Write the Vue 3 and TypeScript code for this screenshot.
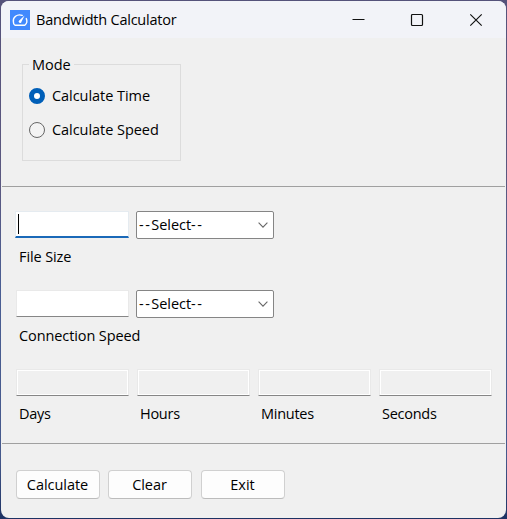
<script setup lang="ts">
import { ref } from 'vue'

interface Unit {
  label: string
  focused: boolean
}

const modes: string[] = ['Calculate Time', 'Calculate Speed']
const mode = ref<string>(modes[0])
const inputs: Unit[] = [
  { label: 'File Size', focused: true },
  { label: 'Connection Speed', focused: false },
]
const results: string[] = ['Days', 'Hours', 'Minutes', 'Seconds']
const actions: string[] = ['Calculate', 'Clear', 'Exit']
</script>

<template>
  <div class="desktop">
    <div class="window">
      <header class="titlebar">
        <svg class="app-icon" width="20" height="20" viewBox="0 0 20 20">
          <rect width="20" height="20" fill="#4189fd" />
          <path d="M12.2 5.3C7 3.6 2.6 7.2 3.4 12C3.6 13.6 4.2 15.2 5.2 15.2H14.8C16.8 13.6 17.3 10.8 16.3 8.6" fill="none" stroke="#fff" stroke-width="1.4" stroke-linecap="round" stroke-linejoin="round" />
          <path d="M14.6 5.5L11.5 11.8A1.4 1.4 0 1 1 9.2 10.5Z" fill="#fff" />
        </svg>
        <span class="title t">Bandwidth Calculator</span>
        <div class="controls">
          <svg width="14" height="14" viewBox="0 0 14 14"><path d="M1.5 6.5H13.5" stroke="#111" /></svg>
          <svg width="14" height="14" viewBox="0 0 14 14"><rect x="1.5" y="1.5" width="11" height="11" rx="1" fill="none" stroke="#111" stroke-width="1.2" /></svg>
          <svg width="14" height="14" viewBox="0 0 14 14"><path d="M1.3 1.3L12.7 12.7M12.7 1.3L1.3 12.7" stroke="#111" stroke-width="1.15" /></svg>
        </div>
      </header>

      <section class="mode-section">
        <fieldset class="group">
          <legend class="t">Mode</legend>
          <label v-for="m in modes" :key="m" class="option" @click="mode = m">
            <span class="radio" :class="{ on: mode === m }"></span>
            <span class="t">{{ m }}</span>
          </label>
        </fieldset>
      </section>

      <section class="form">
        <div v-for="i in inputs" :key="i.label" class="entry">
          <div class="fields">
            <div class="field-slot">
              <div class="field" :class="{ focused: i.focused }">
                <span v-if="i.focused" class="caret"></span>
              </div>
            </div>
            <div class="select">
              <span class="t"><span class="dash">--</span>Select<span class="dash">--</span></span>
              <svg width="10" height="6" viewBox="0 0 10 6"><path d="M.6 .7L5 5.1L9.4 .7" fill="none" stroke="#666" stroke-width="1.1" /></svg>
            </div>
          </div>
          <div class="caption t">{{ i.label }}</div>
        </div>
        <div class="results">
          <div v-for="r in results" :key="r">
            <div class="field readonly"></div>
            <div class="caption result-caption t">{{ r }}</div>
          </div>
        </div>
      </section>

      <footer class="actions">
        <button v-for="a in actions" :key="a" class="t">{{ a }}</button>
      </footer>
    </div>
  </div>
</template>

<style>
body {
  margin: 0;
  overflow: hidden;
}
</style>

<style scoped>
* {
  box-sizing: border-box;
}
.desktop {
  width: 507px;
  height: 519px;
  padding: 1px;
  background: linear-gradient(#55527a 0%, #5b5880 35%, #4a5e93 55%, #46598c 88%, #1d3263 100%);
  font-family: "Open Sans", "Noto Sans", sans-serif;
  font-size: 14.5px;
  color: #000;
}
.window {
  width: 505px;
  height: 517px;
  border-radius: 8px;
  background: #f0f0f0;
  overflow: hidden;
}
.t {
  letter-spacing: -0.05px;
  line-height: 20px;
  white-space: nowrap;
}
.titlebar {
  height: 37px;
  display: flex;
  align-items: center;
  padding-left: 9px;
  background: #f2f3f8;
}
.app-icon {
  flex: none;
}
.title {
  margin-left: 6px;
  letter-spacing: -0.23px;
}
.controls {
  display: flex;
  gap: 45px;
  margin-left: auto;
  padding-right: 23px;
}
.controls svg {
  display: block;
}
.mode-section {
  height: 149px;
  margin: 0 1px;
  padding: 16px 0 0 20px;
  border-bottom: 1px solid #a0a0a0;
}
.group {
  width: 159px;
  height: 107px;
  margin: 0;
  padding: 12px 0 0 6px;
  border: 1px solid #dcdcdc;
  min-width: 0;
}
legend.t {
  padding: 2px 3px 0;
  line-height: 18px;
}
.option {
  display: flex;
  align-items: center;
  gap: 7px;
  height: 20px;
  margin-bottom: 14px;
}
.radio {
  width: 16px;
  height: 16px;
  border: 1px solid #666;
  border-radius: 50%;
  background: #f3f3f3;
}
.radio.on {
  border: 5px solid #005fb8;
  background: #fff;
}
.form {
  height: 257px;
  margin: 0 1px;
  padding: 24px 0 0 13px;
  border-bottom: 1px solid #a0a0a0;
}
.entry {
  height: 79px;
}
.fields {
  display: flex;
  gap: 7px;
}
.field-slot {
  width: 114px;
  padding-left: 1px;
}
.field {
  width: 113px;
  height: 27px;
  background: #fff;
  border: 1px solid #e9e9e9;
  border-bottom-color: #868686;
}
.field.focused {
  width: 114px;
  margin-left: -1px;
  border-color: #e5ebf0;
  border-bottom: 2px solid #1a69b8;
}
.caret {
  display: block;
  width: 1px;
  height: 20px;
  margin: 2px 0 0 2px;
  background: #000;
}
.select {
  width: 138px;
  height: 28px;
  display: flex;
  align-items: center;
  justify-content: space-between;
  padding: 0 5px 0 2px;
  border: 1px solid #858585;
  border-radius: 2px;
  background: #fff;
}
.dash {
  letter-spacing: 1.5px;
}
.caption {
  margin: 8px 0 0 4px;
  letter-spacing: -0.1px;
}
.results {
  display: flex;
  gap: 8px;
  padding-left: 1px;
}
.field.readonly {
  background: #f0f0f0;
  box-shadow: inset 0 0 0 1px #fff;
}
.result-caption {
  margin: 8px 0 0 3px;
  letter-spacing: -0.27px;
}
.actions {
  display: flex;
  padding: 26px 0 0 15px;
}
.actions button {
  width: 84px;
  height: 29px;
  padding: 0 1px 0 0;
  border: 1px solid #d0d0d0;
  border-bottom-color: #bcbcbc;
  border-radius: 4px;
  background: #fdfdfd;
  font-family: inherit;
  font-size: inherit;
  color: #000;
}
.actions button:nth-child(2) {
  margin: 0 9px 0 8px;
}
</style>
